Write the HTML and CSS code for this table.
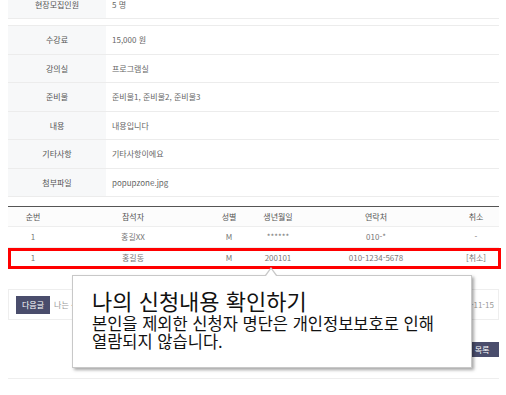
FILE: index.html
```html
<!DOCTYPE html>
<html lang="ko">
<head>
<meta charset="utf-8">
<link rel="stylesheet" href="styles.css">
</head>
<body>
<div class="page">
  <div class="info info-top">
    <div class="row"><div class="label">현장모집인원</div><div class="value">5 명</div></div>
  </div>
  <div class="info info-main">
    <div class="row"><div class="label">수강료</div><div class="value">15,000 원</div></div>
    <div class="row"><div class="label">강의실</div><div class="value">프로그램실</div></div>
    <div class="row"><div class="label">준비물</div><div class="value">준비물1, 준비물2, 준비물3</div></div>
    <div class="row"><div class="label">내용</div><div class="value">내용입니다</div></div>
    <div class="row"><div class="label">기타사항</div><div class="value">기타사항이에요</div></div>
    <div class="row"><div class="label">첨부파일</div><div class="value">popupzone.jpg</div></div>
  </div>

  <div class="plist">
    <div class="prow phead">
      <span>순번</span><span>참석자</span><span>성별</span><span>생년월일</span><span>연락처</span><span class="c6">취소</span>
    </div>
    <div class="prow">
      <span>1</span><span>홍길XX</span><span>M</span><span>******</span><span>010-*</span><span class="c6">-</span>
    </div>
    <div class="prow mine">
      <span>1</span><span>홍길동</span><span>M</span><span>200101</span><span>010-1234-5678</span><span class="c6">[취소]</span>
    </div>
  </div>

  <div class="nav">
    <span class="btn">다음글</span>
    <span class="nav-title">나는 신청가능한 강좌</span>
    <span class="nav-date">2020-11-15</span>
  </div>

  <div class="actions">
    <span class="btn">목록</span>
  </div>

  <div class="bottom-line"></div>

  <div class="tip">
    <div class="tip-title">나의 신청내용 확인하기</div>
    <div class="tip-text">본인을 제외한 신청자 명단은 개인정보보호로 인해<br>열람되지 않습니다.</div>
  </div>
</div>
</body>
</html>
```

FILE: styles.css
```css
* { box-sizing: border-box; margin: 0; padding: 0; }
html, body { background: #fff; }
body {
  font-family: "Noto Sans CJK KR", "Noto Sans", sans-serif;
  font-size: 8px;
  color: #666;
  overflow: hidden;
  width: 506px;
  height: 395px;
}
.page {
  position: relative;
  width: 491px;
  margin-left: 8px;
}
.info { border-bottom: 1px solid #ececec; }
.info-top { margin-top: -10px; }
.info-main { margin-top: 6px; border-top: 1px solid #ececec; border-bottom: none; }
.row {
  display: grid;
  grid-template-columns: 98px 1fr;
  height: 28.5px;
  border-bottom: 1px solid #ececec;
}
.info-top .row { border-bottom: none; height: 28px; }
.label {
  background: #f7f8f9;
  color: #555;
  display: flex;
  align-items: center;
  justify-content: center;
}
.value {
  display: flex;
  align-items: center;
  padding-left: 6px;
  color: #666;
}

.plist {
  margin-top: 9px;
  border-top: 1px solid #555;
}
.prow {
  position: relative;
  display: grid;
  grid-template-columns: 50px 150px 42px 56px 140px 53px;
  height: 20.5px;
  border-bottom: 1px solid #eeeeee;
  align-items: center;
  text-align: center;
  color: #777;
}
.prow .c6 { padding-left: 7px; }
.phead { height: 20px; color: #555; background: #fcfcfc; }
.mine { border-bottom: none; }
.mine::after {
  content: "";
  position: absolute;
  left: 0;
  right: -2px;
  top: 0;
  bottom: -1px;
  border: 3px solid #ff0000;
}

.nav {
  margin-top: 21px;
  height: 31px;
  border: 1px solid #eeeeee;
  display: flex;
  align-items: center;
  padding: 0 4px 0 7px;
}
.btn {
  display: inline-flex;
  align-items: center;
  justify-content: center;
  background: #4a4d6c;
  color: #fff;
  height: 18px;
  padding: 0 6px;
  font-size: 8px;
}
.nav-title { margin-left: 4px; color: #999; flex: 1; }
.nav-date { color: #999; }
.actions {
  margin-top: 22px;
  display: flex;
  justify-content: flex-end;
}
.actions .btn { height: 15px; width: 34px; padding: 0; }
.bottom-line {
  margin-top: 21px;
  border-top: 1px solid #eeeeee;
}

.tip {
  position: absolute;
  left: 64px;
  top: 285px;
  width: 400px;
  height: 93px;
  background: #fff;
  border: 1px solid #c8c8c8;
  box-shadow: 2px 2px 3px rgba(0,0,0,0.35);
  padding: 10px 0 0 19px;
  color: #111;
}
.tip::before {
  content: "";
  position: absolute;
  left: 192px;
  top: -9px;
  width: 0;
  height: 0;
  border-left: 6px solid transparent;
  border-right: 6px solid transparent;
  border-bottom: 8px solid #c8c8c8;
}
.tip::after {
  content: "";
  position: absolute;
  left: 193px;
  top: -7px;
  width: 0;
  height: 0;
  border-left: 5px solid transparent;
  border-right: 5px solid transparent;
  border-bottom: 7px solid #fff;
}
.tip-title {
  font-size: 22px;
  line-height: 28px;
  color: #111;
}
.tip-text {
  font-size: 16.5px;
  line-height: 18px;
  color: #111;
}
```
